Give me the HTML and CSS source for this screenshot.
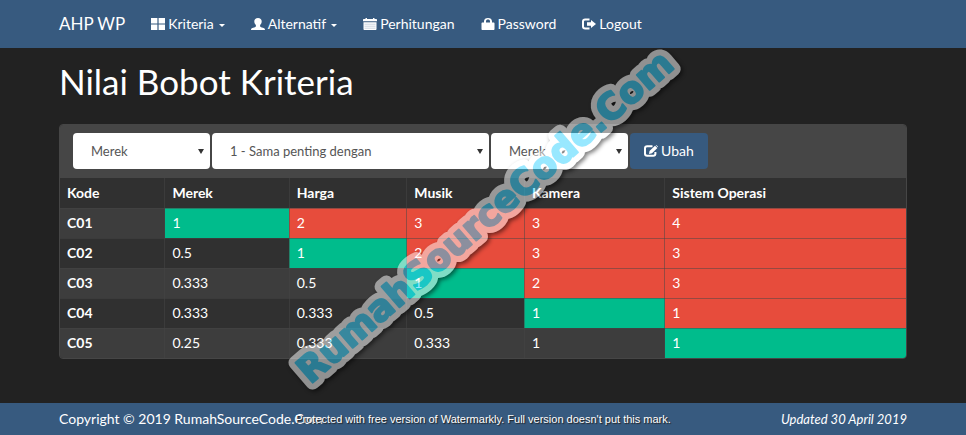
FILE: index.html
```html
<!DOCTYPE html>
<html lang="id">
<head>
<meta charset="utf-8">
<title>Nilai Bobot Kriteria</title>
<link rel="stylesheet" href="styles.css">
</head>
<body>
<nav class="navbar">
  <a class="brand" href="#">AHP WP</a>
  <a class="nav-link" href="#"><svg class="icon" viewBox="0 0 14 12"><path d="M0 0h6.400v5.500H0zM7.600 0H14v5.500H7.600zM0 6.500h6.400V12H0zM7.600 6.500H14V12H7.600z"/></svg>Kriteria<span class="caret"></span></a>
  <a class="nav-link" href="#"><svg class="icon" viewBox="0 0 14 12"><path d="M7 0c2.300 0 3.700 1.300 3.700 3.300 0 1.700-.7 3-1.600 3.800v1.200c0 .4.400.7 1 .9l2.500.8c.9.300 1.400.9 1.400 2H0c0-1.100.5-1.700 1.400-2l2.500-.8c.6-.2 1-.5 1-.9V7.100C4 6.300 3.300 5 3.300 3.300 3.300 1.300 4.700 0 7 0z"/></svg>Alternatif<span class="caret"></span></a>
  <a class="nav-link" href="#"><svg class="icon" viewBox="0 0 14 12"><path d="M1 1h1.500V0H4v1h6V0h1.500v1H13c.6 0 1 .4 1 1v1.300H0V2c0-.6.400-1 1-1zM.5 4.200h13V11c0 .6-.4 1-1 1h-11c-.6 0-1-.4-1-1z"/><path class="rule" d="M1.500 6.200h11M1.500 8.200h11M1.500 10.200h11"/></svg>Perhitungan</a>
  <a class="nav-link" href="#"><svg class="icon" viewBox="0 0 14 12"><path fill-rule="evenodd" d="M3 4.500V3.300C3 1.200 4.700 0 7 0s4 1.200 4 3.300v1.200h1.500c.6 0 1 .4 1 1V11c0 .6-.4 1-1 1h-11c-.6 0-1-.4-1-1V5.500c0-.6.400-1 1-1zM5 4.500h4V3.300C9 2.200 8.200 1.600 7 1.600S5 2.200 5 3.300z"/></svg>Password</a>
  <a class="nav-link" href="#"><svg class="icon" viewBox="0 0 14 12"><path class="line" d="M7.500 1.400H3.200C1.900 1.400 1 2.200 1 3.400v5.200c0 1.200.9 2 2.200 2h4.300"/><path d="M5 4.300h4V1.900L14 6 9 10.100V7.700H5z"/></svg>Logout</a>
</nav>
<main class="content">
  <h1>Nilai Bobot Kriteria</h1>
  <section class="panel">
    <form class="panel-heading">
      <span class="picker narrow"><select aria-label="Kriteria pertama"><option>Merek</option><option>Harga</option><option>Musik</option><option>Kamera</option><option>Sistem Operasi</option></select></span>
      <span class="picker wide"><select aria-label="Nilai"><option>1 - Sama penting dengan</option></select></span>
      <span class="picker narrow"><select aria-label="Kriteria kedua"><option>Merek</option><option>Harga</option><option>Musik</option><option>Kamera</option><option>Sistem Operasi</option></select></span>
      <button class="btn" type="button"><svg class="icon" viewBox="0 0 14 12"><path class="line" d="M8.500 1.200H3.200C1.900 1.200 1 2 1 3.200v5.600c0 1.200.9 2 2.200 2h6c1.300 0 2.200-.8 2.200-2V7"/><path d="M5 9l.5-3L11 .8l2.400 2.100L8 8.300zM11.700.2l.5-.2L14 1.600l-.2.700z"/></svg>Ubah</button>
    </form>
    <table>
      <colgroup><col class="c-code"><col class="c-merek"><col class="c-mid"><col class="c-mid"><col class="c-kamera"><col></colgroup>
      <thead><tr><th>Kode</th><th>Merek</th><th>Harga</th><th>Musik</th><th>Kamera</th><th>Sistem Operasi</th></tr></thead>
      <tbody>
        <tr><th>C01</th><td class="same">1</td><td class="over">2</td><td class="over">3</td><td class="over">3</td><td class="over">4</td></tr>
        <tr><th>C02</th><td>0.5</td><td class="same">1</td><td class="over">2</td><td class="over">3</td><td class="over">3</td></tr>
        <tr><th>C03</th><td>0.333</td><td>0.5</td><td class="same">1</td><td class="over">2</td><td class="over">3</td></tr>
        <tr><th>C04</th><td>0.333</td><td>0.333</td><td>0.5</td><td class="same">1</td><td class="over">1</td></tr>
        <tr><th>C05</th><td>0.25</td><td>0.333</td><td>0.333</td><td>1</td><td class="same">1</td></tr>
      </tbody>
    </table>
  </section>
</main>
<footer class="footer">
  <span>Copyright © 2019 RumahSourceCode.Com</span>
  <em>Updated 30 April 2019</em>
  <small class="notice">Protected with free version of Watermarkly. Full version doesn't put this mark.</small>
</footer>
<svg class="watermark" viewBox="0 0 966 435">
  <g transform="translate(493 226) rotate(-41)">
    <text class="mark-edge" text-anchor="middle">RumahSourceCode.Com</text>
    <text class="mark-fill" text-anchor="middle">RumahSourceCode.Com</text>
  </g>
</svg>
</body>
</html>
```
FILE: styles.css
```css
* { box-sizing: border-box; }
body {
  margin: 0;
  min-height: 100vh;
  display: flex;
  flex-direction: column;
  position: relative;
  background: #222;
  color: #fff;
  font: 14px/20px Lato, sans-serif;
}
a { color: #fff; text-decoration: none; }
.navbar {
  display: flex;
  align-items: center;
  height: 48px;
  padding: 0 59px;
  background: #375a7f;
}
.brand { font-size: 17px; margin-right: 13px; }
.nav-link { display: flex; align-items: center; padding: 0 13px; }
.icon { width: 14px; height: 12px; margin-right: 3px; fill: currentColor; }
.icon .line { fill: none; stroke: currentColor; stroke-width: 2; }
.icon .rule { fill: none; stroke: #375a7f; stroke-width: 1; opacity: .25; }
.caret {
  margin: 2px 0 0 5px;
  border: 3px solid transparent;
  border-top-color: #fff;
  border-bottom: 0;
}
.content { flex: 1; padding: 15px 59px 0; }
h1 { margin: 0 0 25px; font-size: 35px; line-height: 36px; font-weight: 400; }
.panel {
  border: 1px solid #464646;
  border-radius: 4px;
  background: #303030;
  overflow: hidden;
}
.panel-heading {
  display: flex;
  gap: 2px;
  padding: 8px 13px 9px;
  background: #464646;
}
.picker { position: relative; }
.picker::after {
  content: "";
  position: absolute;
  right: 6px;
  top: 16px;
  border: 3px solid transparent;
  border-top: 5px solid #333;
  border-bottom: 0;
  pointer-events: none;
}
.narrow { flex: 0 0 137px; }
.wide { flex: 0 0 277px; }
select {
  appearance: none;
  display: block;
  width: 100%;
  height: 36px;
  padding: 0 18px;
  border: 0;
  border-radius: 4px;
  background: #fff;
  color: #555;
  font: inherit;
  font-size: 13px;
}
.btn {
  display: flex;
  align-items: center;
  height: 36px;
  padding: 0 14px;
  border: 0;
  border-radius: 4px;
  background: #375a7f;
  color: #fff;
  font: inherit;
}
table { width: 100%; table-layout: fixed; border-collapse: collapse; }
.c-code { width: 12.400%; }
.c-merek { width: 14.700%; }
.c-mid { width: 13.900%; }
.c-kamera { width: 16.600%; }
th, td {
  height: 30px;
  padding: 0 7px;
  border: 1px solid rgba(70, 70, 70, .5);
  text-align: left;
}
th { font-weight: 700; }
tr > :first-child { border-left: 0; }
tr > :last-child { border-right: 0; }
thead th { border-top: 0; }
tbody tr:last-child > * { border-bottom: 0; }
tbody tr:nth-child(odd) { background: #3d3d3d; }
.same { background: #00bc8c; }
.over { background: #e74c3c; }
.footer {
  position: relative;
  display: flex;
  justify-content: space-between;
  align-items: center;
  height: 32px;
  padding: 0 59px;
  background: #375a7f;
}
.footer em { font-size: 13px; }
.notice {
  position: absolute;
  inset: 0;
  text-align: center;
  font: 11px/32px "Liberation Sans", sans-serif;
  text-shadow: 1px 1px 1px #222;
}
.watermark {
  position: absolute;
  inset: 0;
  width: 100%;
  height: 100%;
  opacity: .5;
  pointer-events: none;
  filter: drop-shadow(2px 2px 2px #000);
}
.watermark text {
  font: 700 36px "DejaVu Sans", sans-serif;
  stroke-linejoin: round;
}
.mark-edge { fill: #fff; stroke: #fff; stroke-width: 14px; }
.mark-fill { fill: #33d2ff; stroke: #33d2ff; stroke-width: 2px; }
```
